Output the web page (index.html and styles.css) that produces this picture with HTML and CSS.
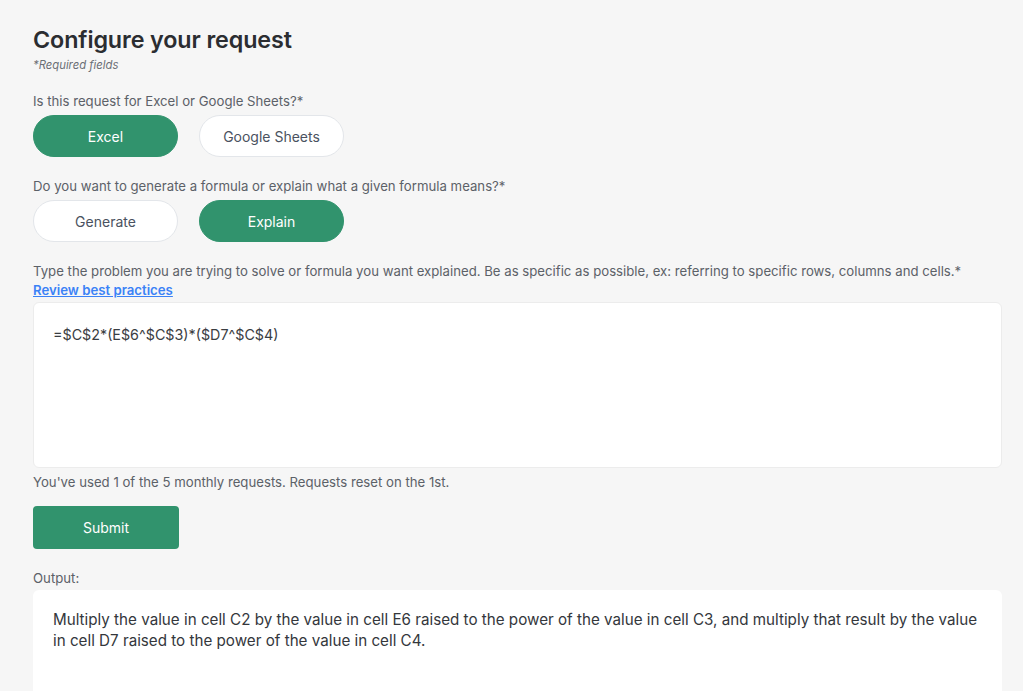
FILE: index.html
```html
<!DOCTYPE html>
<html>
<head>
<meta charset="utf-8">
<link rel="stylesheet" href="styles.css">
</head>
<body>
<main class="page">
  <h1 class="title">Configure your request</h1>
  <p class="required">*Required fields</p>

  <p class="label q1">Is this request for Excel or Google Sheets?*</p>
  <div class="choices">
    <button class="pill active">Excel</button>
    <button class="pill">Google Sheets</button>
  </div>

  <p class="label q2">Do you want to generate a formula or explain what a given formula means?*</p>
  <div class="choices">
    <button class="pill">Generate</button>
    <button class="pill active">Explain</button>
  </div>

  <p class="label q3">Type the problem you are trying to solve or formula you want explained. Be as specific as possible, ex: referring to specific rows, columns and cells.*</p>
  <a class="link" href="#">Review best practices</a>
  <div class="textbox">=$C$2*(E$6^$C$3)*($D7^$C$4)</div>

  <p class="usage">You've used 1 of the 5 monthly requests. Requests reset on the 1st.</p>
  <button class="submit">Submit</button>

  <p class="label out-label">Output:</p>
  <div class="output">Multiply the value in cell C2 by the value in cell E6 raised to the power of the value in cell C3, and multiply that result by the value in cell D7 raised to the power of the value in cell C4.</div>
</main>
</body>
</html>
```
FILE: styles.css
```css
* { box-sizing: border-box; }
html, body { margin: 0; padding: 0; }
body {
  background: #f6f6f6;
  font-family: Inter, "Noto Sans", sans-serif;
  color: #5a5f66;
  height: 691px;
  overflow: hidden;
}
.page {
  padding: 24px 21px 0 33px;
  display: flex;
  flex-direction: column;
  align-items: flex-start;
}
.title {
  margin: 0;
  font-size: 23.3px;
  font-weight: 600;
  color: #2b2d31;
  line-height: 31px;
  letter-spacing: -0.1px;
}
.required {
  margin: 3px 0 0 0;
  font-size: 11.3px;
  font-style: italic;
  color: #6b6f75;
  line-height: 14px;
}
.label {
  margin: 0;
  font-size: 13.2px;
  line-height: 18px;
  color: #5c6168;
}
.q1 { margin-top: 20px; }
.q2 { margin-top: 20px; }
.q3 { margin-top: 20px; }
.choices {
  display: flex;
  gap: 21px;
  margin-top: 5px;
}
.pill {
  width: 145px;
  height: 42px;
  border-radius: 21px;
  border: 1px solid #e3e6ea;
  background: #ffffff;
  color: #4a5260;
  font-family: inherit;
  font-size: 14px;
  cursor: pointer;
}
.pill.active {
  background: #31936d;
  border-color: #31936d;
  color: #ffffff;
}
.link {
  font-size: 13.2px;
  font-weight: 600;
  color: #3b82f6;
  text-decoration: underline;
  line-height: 18px;
  margin-top: 1px;
}
.textbox {
  align-self: stretch;
  margin-top: 3px;
  height: 166px;
  background: #ffffff;
  border: 1px solid #ececec;
  border-radius: 6px;
  padding: 22px 19px;
  font-size: 14.3px;
  color: #3a3d42;
  line-height: 20px;
}
.usage {
  margin: 5px 0 0 0;
  font-size: 13.2px;
  line-height: 18px;
  color: #5c6168;
}
.submit {
  margin-top: 15px;
  width: 146px;
  height: 43px;
  background: #31936d;
  border: none;
  border-radius: 4px;
  color: #ffffff;
  font-family: inherit;
  font-size: 14px;
  cursor: pointer;
}
.out-label { margin-top: 20px; }
.output {
  align-self: stretch;
  margin-top: 3px;
  height: 120px;
  background: #ffffff;
  border-radius: 6px 6px 0 0;
  padding: 19px 20px;
  font-size: 15.2px;
  line-height: 21px;
  color: #34373c;
}
```
